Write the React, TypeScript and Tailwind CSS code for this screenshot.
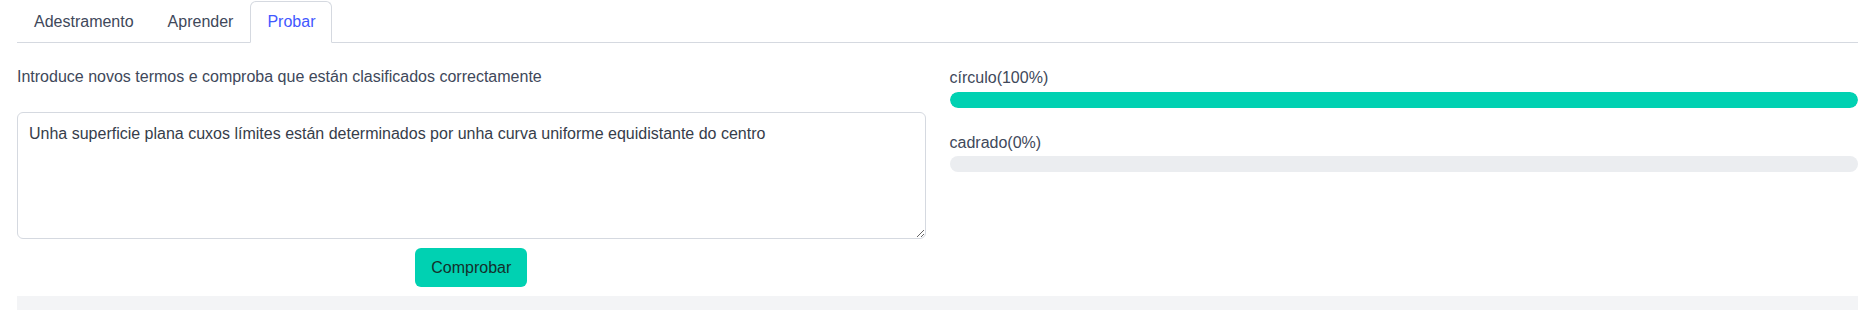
import React from 'react';

const TABS = ['Adestramento', 'Aprender', 'Probar'];
const ACTIVE = 'Probar';

const RESULTS = [
  { label: 'círculo', value: 100 },
  { label: 'cadrado', value: 0 },
];

export default function App() {
  return (
    <div className="min-h-[310px] bg-white pl-[17px] pr-[7px] pt-px text-base text-[#40485a] font-['Liberation_Sans',Arial,sans-serif]">
      <div className="flex border-b border-[#d5d9e0]">
        {TABS.map((t) => (
          <a
            key={t}
            className={`-mb-px border px-4 py-2 leading-6 rounded-t-md cursor-pointer ${
              t === ACTIVE ? 'border-[#d5d9e0] border-b-white text-[#4258ff] bg-white' : 'border-transparent'
            }`}
          >
            {t}
          </a>
        ))}
      </div>

      <div className="mt-[22px] grid grid-cols-2 gap-6">
        <div className="flex flex-col">
          <p className="leading-6">Introduce novos termos e comproba que están clasificados correctamente</p>
          <textarea
            className="mt-[23px] h-[127px] w-full rounded-md border border-[#d5d9e0] bg-white px-[11px] pt-[9px] leading-6 text-[#363d4a] outline-none"
            defaultValue="Unha superficie plana cuxos límites están determinados por unha curva uniforme equidistante do centro"
          />
          <div className="mt-[9px] flex justify-center">
            <button className="h-[39px] rounded-md bg-[#00d1b2] px-4 leading-6 text-[#14302b]">Comprobar</button>
          </div>
        </div>

        <div className="flex flex-col pt-px">
          {RESULTS.map((r, i) => (
            <div key={r.label} className={i > 0 ? 'mt-[23px]' : ''}>
              <div className="leading-6">
                {r.label}({r.value}%)
              </div>
              <div className={`h-4 w-full overflow-hidden rounded-full bg-[#ebedf0] ${i === 0 ? 'mt-[2px]' : 'mt-px'}`}>
                <div className="h-full rounded-full bg-[#00d1b2]" style={{ width: `${r.value}%` }} />
              </div>
            </div>
          ))}
        </div>
      </div>

      <div className="mt-[9px] h-[20px] bg-[#f3f4f6]" />
    </div>
  );
}
